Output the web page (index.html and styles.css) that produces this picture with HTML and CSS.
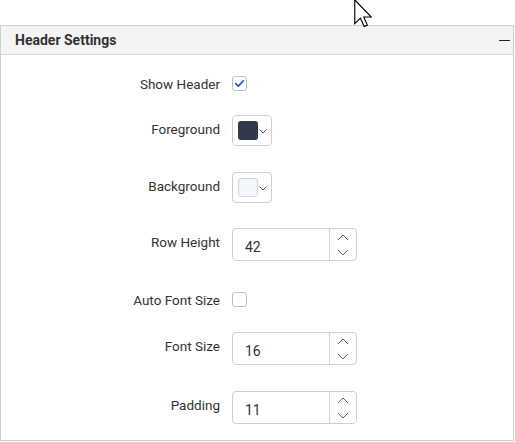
FILE: index.html
```html
<!DOCTYPE html>
<html>
<head>
<meta charset="utf-8">
<link rel="stylesheet" href="styles.css">
</head>
<body>
<div class="panel">
  <div class="panel-header">
    <span class="panel-title">Header Settings</span>
    <span class="collapse-icon"></span>
  </div>
  <div class="panel-body">
    <div class="row row-check">
      <label class="label">Show Header</label>
      <span class="checkbox checked">
        <svg viewBox="0 0 16 16" width="15" height="15"><path d="M4 8.2 L6.8 10.8 L12 5.2" fill="none" stroke="#2456e0" stroke-width="1.8" stroke-linecap="round" stroke-linejoin="round"/></svg>
      </span>
    </div>
    <div class="row row-picker row-tight">
      <label class="label">Foreground</label>
      <span class="picker"><span class="swatch swatch-dark"></span><svg class="chev" viewBox="0 0 8 5" width="8" height="5"><path d="M0.5 0.5 L4 4 L7.5 0.5" fill="none" stroke="#555" stroke-width="1"/></svg></span>
    </div>
    <div class="row row-picker row-wide">
      <label class="label">Background</label>
      <span class="picker"><span class="swatch swatch-light"></span><svg class="chev" viewBox="0 0 8 5" width="8" height="5"><path d="M0.5 0.5 L4 4 L7.5 0.5" fill="none" stroke="#555" stroke-width="1"/></svg></span>
    </div>
    <div class="row row-num">
      <label class="label">Row Height</label>
      <span class="numeric"><span class="num-value">42</span><span class="spin"><svg viewBox="0 0 12 7" width="12" height="7"><path d="M1 6 L6 1 L11 6" fill="none" stroke="#666" stroke-width="1"/></svg><svg viewBox="0 0 12 7" width="12" height="7"><path d="M1 1 L6 6 L11 1" fill="none" stroke="#666" stroke-width="1"/></svg></span></span>
    </div>
    <div class="row row-check row-loose">
      <label class="label">Auto Font Size</label>
      <span class="checkbox"></span>
    </div>
    <div class="row row-num">
      <label class="label">Font Size</label>
      <span class="numeric"><span class="num-value">16</span><span class="spin"><svg viewBox="0 0 12 7" width="12" height="7"><path d="M1 6 L6 1 L11 6" fill="none" stroke="#666" stroke-width="1"/></svg><svg viewBox="0 0 12 7" width="12" height="7"><path d="M1 1 L6 6 L11 1" fill="none" stroke="#666" stroke-width="1"/></svg></span></span>
    </div>
    <div class="row row-num row-wide">
      <label class="label">Padding</label>
      <span class="numeric"><span class="num-value">11</span><span class="spin"><svg viewBox="0 0 12 7" width="12" height="7"><path d="M1 6 L6 1 L11 6" fill="none" stroke="#666" stroke-width="1"/></svg><svg viewBox="0 0 12 7" width="12" height="7"><path d="M1 1 L6 6 L11 1" fill="none" stroke="#666" stroke-width="1"/></svg></span></span>
    </div>
  </div>
</div>
<svg class="cursor" viewBox="0 0 12 19" width="18" height="28.5"><path d="M0.5 0.5 L0.5 16.5 L4.3 12.8 L6.8 18.3 L8.9 17.4 L6.5 12 L11.5 12 Z" fill="#fff" stroke="#000" stroke-width="0.75" stroke-linejoin="miter"/></svg>
</body>
</html>
```
FILE: styles.css
```css
* { box-sizing: border-box; }
body {
  margin: 0;
  font-family: Roboto, "Noto Sans", sans-serif;
  color: #333;
  background: #fff;
}
.panel {
  margin-top: 25px;
  width: 514px;
  border: 1px solid #cfcfcf;
}
.panel-header {
  height: 29px;
  background: #f4f4f4;
  border-bottom: 1px solid #d4d4d4;
  display: flex;
  align-items: center;
  justify-content: space-between;
  padding: 0 3px 0 14px;
}
.panel-title {
  font-size: 14px;
  font-weight: 700;
  color: #333;
  padding-bottom: 1px;
}
.collapse-icon {
  width: 11px;
  height: 1.5px;
  background: #222;
  margin-top: 1px;
}
.panel-body {
  display: flex;
  flex-direction: column;
  gap: 25px;
  padding: 21px 0 16px;
}
.row {
  display: flex;
  align-items: center;
  gap: 12px;
}
.row-tight { margin-top: -1px; }
.row-wide { margin-top: 1px; }
.row-loose { margin-top: 6px; }
.row-check { height: 15px; }
.row-picker { height: 31px; }
.row-num { height: 33px; }
.label {
  width: 219px;
  text-align: right;
  font-size: 13.5px;
  line-height: 15px;
  color: #333;
  position: relative;
  top: 0;
}
.row-check .label { top: 1px; }
.row-num .label { top: -2px; }
.row-picker .label { top: -1px; }
.checkbox {
  width: 15px;
  height: 15px;
  border: 1px solid #bdbdbd;
  border-radius: 3px;
  background: #fff;
  display: flex;
  align-items: center;
  justify-content: center;
}
.checkbox svg { display: block; margin: -1px; }
.picker {
  width: 40px;
  height: 31px;
  border: 1px solid #cfcfcf;
  border-radius: 4px;
  display: flex;
  align-items: center;
  padding-left: 5px;
  gap: 1px;
}
.swatch {
  width: 20px;
  height: 19px;
  border-radius: 3px;
}
.swatch-dark { background: #2f3a4d; }
.swatch-light { background: #f3f6fa; border: 1px solid #d2d6dc; }
.chev { display: block; margin-top: 1px; }
.numeric {
  width: 125px;
  height: 33px;
  border: 1px solid #cfcfcf;
  border-radius: 4px;
  display: flex;
  align-items: stretch;
}
.num-value {
  flex: 1;
  display: flex;
  align-items: center;
  padding: 4px 0 0 12px;
  font-size: 14px;
  color: #333;
}
.spin {
  width: 27px;
  border-left: 1px solid #d4d4d4;
  display: flex;
  flex-direction: column;
  align-items: center;
  justify-content: center;
  gap: 8px;
}
.spin svg { display: block; }
.cursor {
  position: absolute;
  left: 354px;
  top: -1px;
}
```
